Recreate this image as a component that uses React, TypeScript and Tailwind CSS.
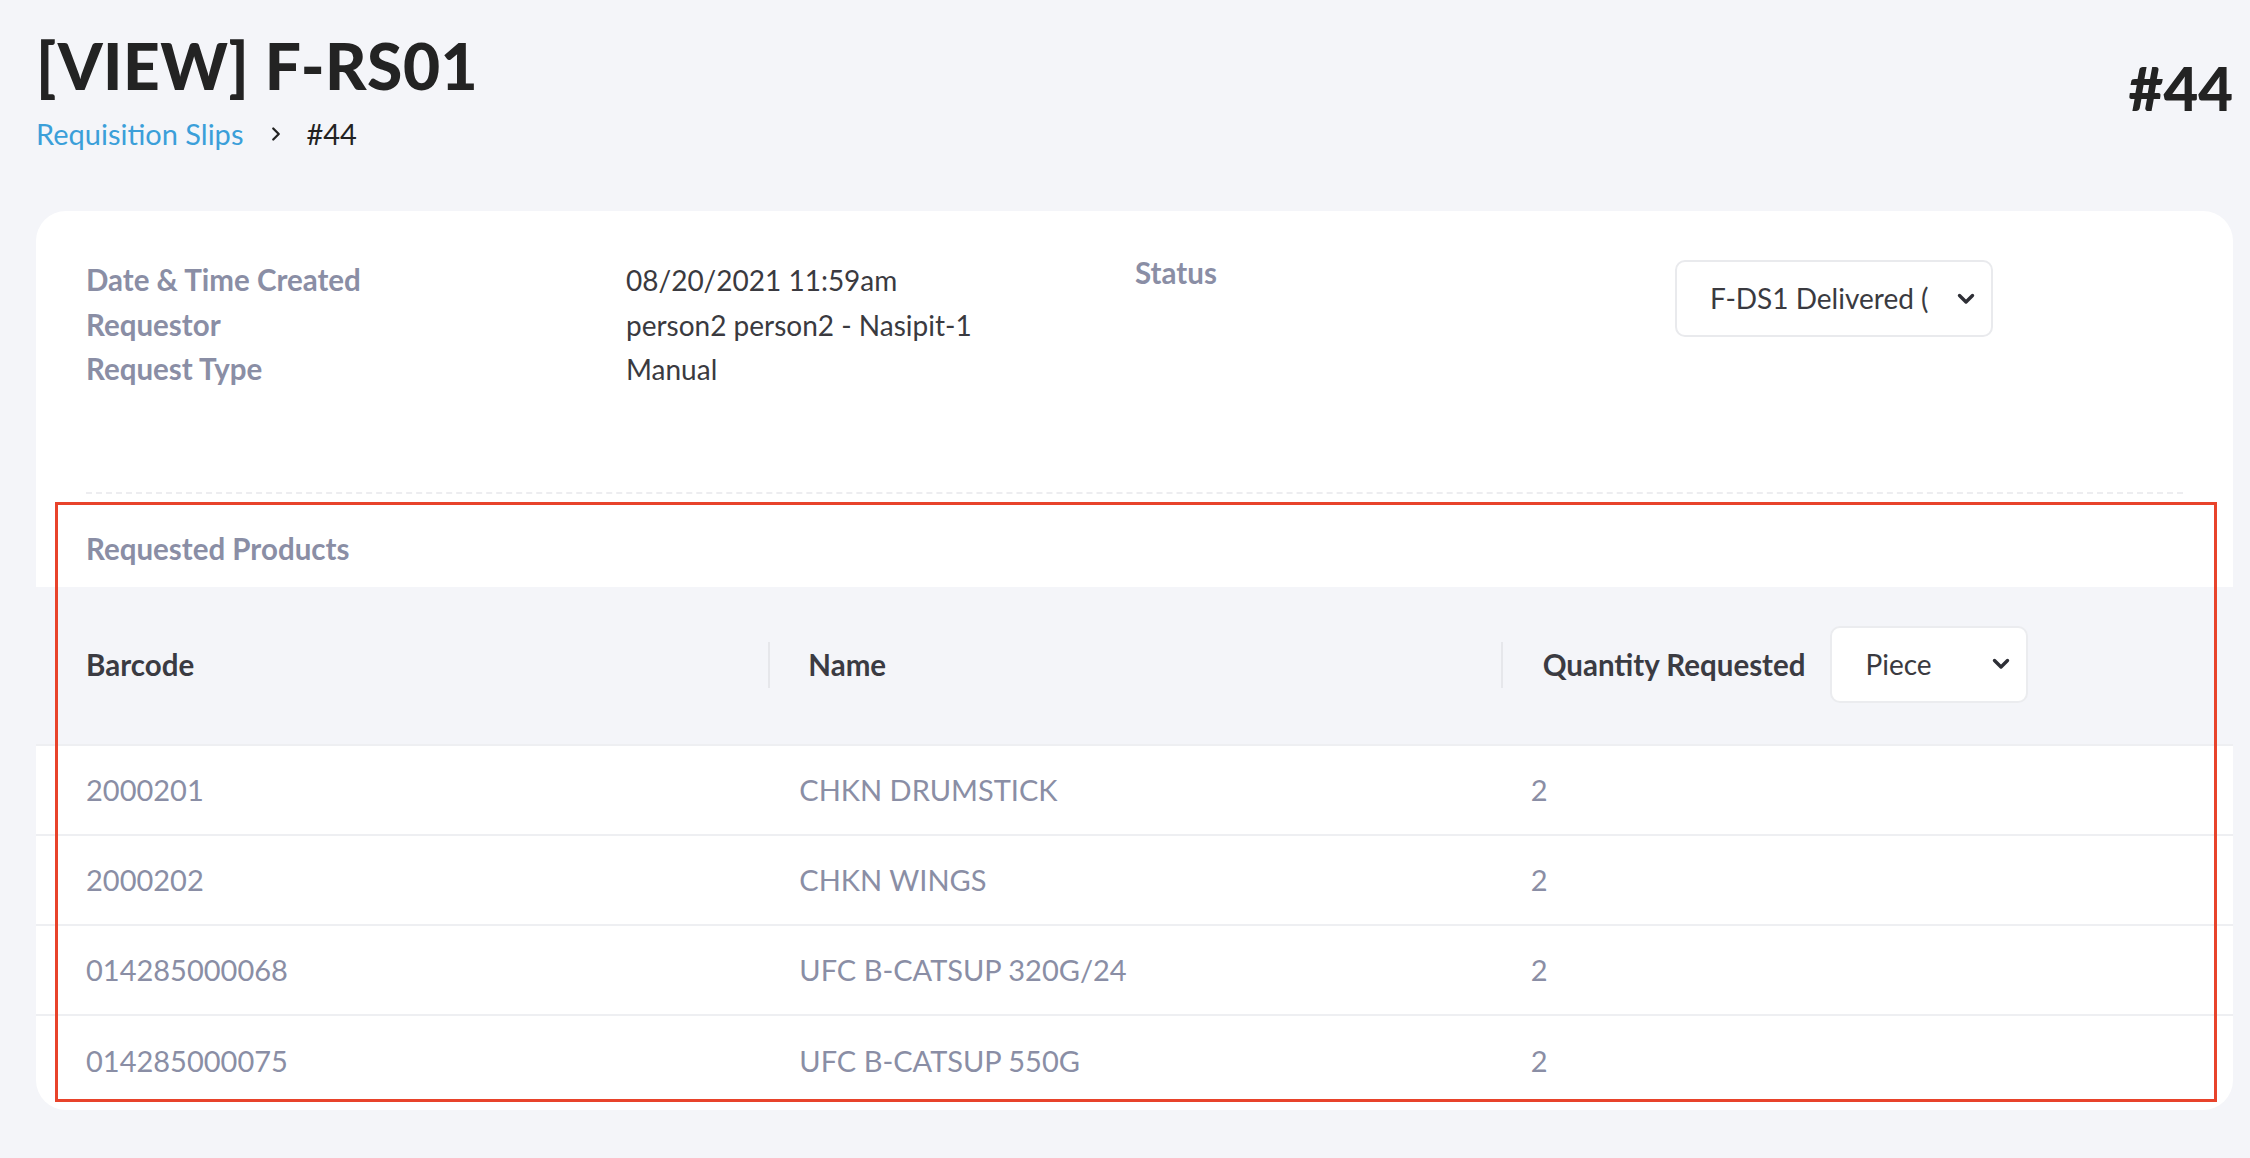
import { ChevronRight } from 'lucide-react';

const rows = [
  { barcode: '2000201', name: 'CHKN DRUMSTICK', qty: '2' },
  { barcode: '2000202', name: 'CHKN WINGS', qty: '2' },
  { barcode: '014285000068', name: 'UFC B-CATSUP 320G/24', qty: '2' },
  { barcode: '014285000075', name: 'UFC B-CATSUP 550G', qty: '2' },
];

function Chevron() {
  return (
    <svg width="18" height="12" viewBox="0 0 18 12" fill="none">
      <path d="M2.5 2.5L9 9L15.5 2.5" stroke="#2e2f36" strokeWidth="3.4" strokeLinecap="round" strokeLinejoin="round" />
    </svg>
  );
}

export default function App() {
  return (
    <div className="min-h-screen bg-[#f4f5f9] pl-[36px] pr-[17px] pt-[34px] pb-[46px] font-['Lato',sans-serif]">
      {/* Header */}
      <header className="flex items-center justify-between">
        <div>
          <h1 className="text-[64px] leading-none font-black text-[#232323] tracking-[0.5px]">[VIEW] F-RS01</h1>
          <nav className="mt-[16px] flex items-center text-[29px] leading-[40px]">
            <span className="text-[#3b9fd9]">Requisition Slips</span>
            <ChevronRight className="w-[22px] h-[22px] ml-[22px] mr-[19px] text-[#222]" strokeWidth={2.5} />
            <span className="text-[#222]">#44</span>
          </nav>
        </div>
        <div className="text-[60px] leading-none font-black text-[#232323] mb-[12px]">#44</div>
      </header>

      {/* Card */}
      <div className="relative mt-[57px] bg-white rounded-[30px] overflow-hidden">
        <div className="px-[50px] pt-[47px]">
          <div className="grid grid-cols-[540px_509px_540px_auto] text-[28px] leading-[44.5px]">
            <div className="font-bold text-[29.5px] text-[#8a8ea5]">
              <div>Date &amp; Time Created</div>
              <div>Requestor</div>
              <div>Request Type</div>
            </div>
            <div className="text-[#3a3a40]">
              <div>08/20/2021 11:59am</div>
              <div>person2 person2 - Nasipit-1</div>
              <div>Manual</div>
            </div>
            <div className="font-bold text-[29.5px] text-[#8a8ea5] -mt-[7px]">Status</div>
            <div>
              <div className="w-[318px] h-[77px] mt-[2px] flex items-center justify-between pl-[33px] pr-[16px] border-2 border-[#e9eaed] rounded-[10px] text-[#3a3a40] whitespace-nowrap overflow-hidden">
                <span>F-DS1 Delivered (</span>
                <Chevron />
              </div>
            </div>
          </div>
          <div className="mt-[100px] border-t-2 border-dashed border-[#ededf0]" />
        </div>

        {/* Requested Products */}
        <div className="px-[50px] pt-[35px] pb-[18px] text-[29.5px] leading-[40px] font-bold text-[#8a8ea5]">Requested Products</div>

        <div className="grid grid-cols-3 h-[159px] bg-[#f4f5f9] text-[29.5px] font-bold text-[#3b3b42] border-b-2 border-[#eeeff2]">
          <div className="flex items-center pl-[50px]">Barcode</div>
          <div className="flex items-center">
            <div className="w-[2px] h-[46px] bg-[#e6e7eb]" />
            <span className="ml-[38px]">Name</span>
          </div>
          <div className="flex items-center">
            <div className="w-[2px] h-[46px] bg-[#e6e7eb]" />
            <span className="ml-[40px]">Quantity Requested</span>
            <div className="ml-[25px] -mt-[2px] w-[198px] h-[77px] flex items-center justify-between pl-[33px] pr-[16px] bg-white border-2 border-[#ebecef] rounded-[10px] font-normal text-[28px] text-[#3a3a40]">
              <span>Piece</span>
              <Chevron />
            </div>
          </div>
        </div>

        {rows.map((r, i) => (
          <div
            key={r.barcode}
            className={`grid grid-cols-3 h-[90px] items-center text-[29px] text-[#8a8ea5] ${i < rows.length - 1 ? 'border-b-2 border-[#eeeff2]' : ''}`}
          >
            <div className="pl-[50px]">{r.barcode}</div>
            <div className="pl-[31px]">{r.name}</div>
            <div className="pl-[30px]">{r.qty}</div>
          </div>
        ))}
        <div className="h-[4px]" />

        {/* annotation */}
        <div className="absolute left-[19px] top-[291px] w-[2162px] h-[600px] border-[3px] border-[#e8432b] pointer-events-none" />
      </div>
    </div>
  );
}
